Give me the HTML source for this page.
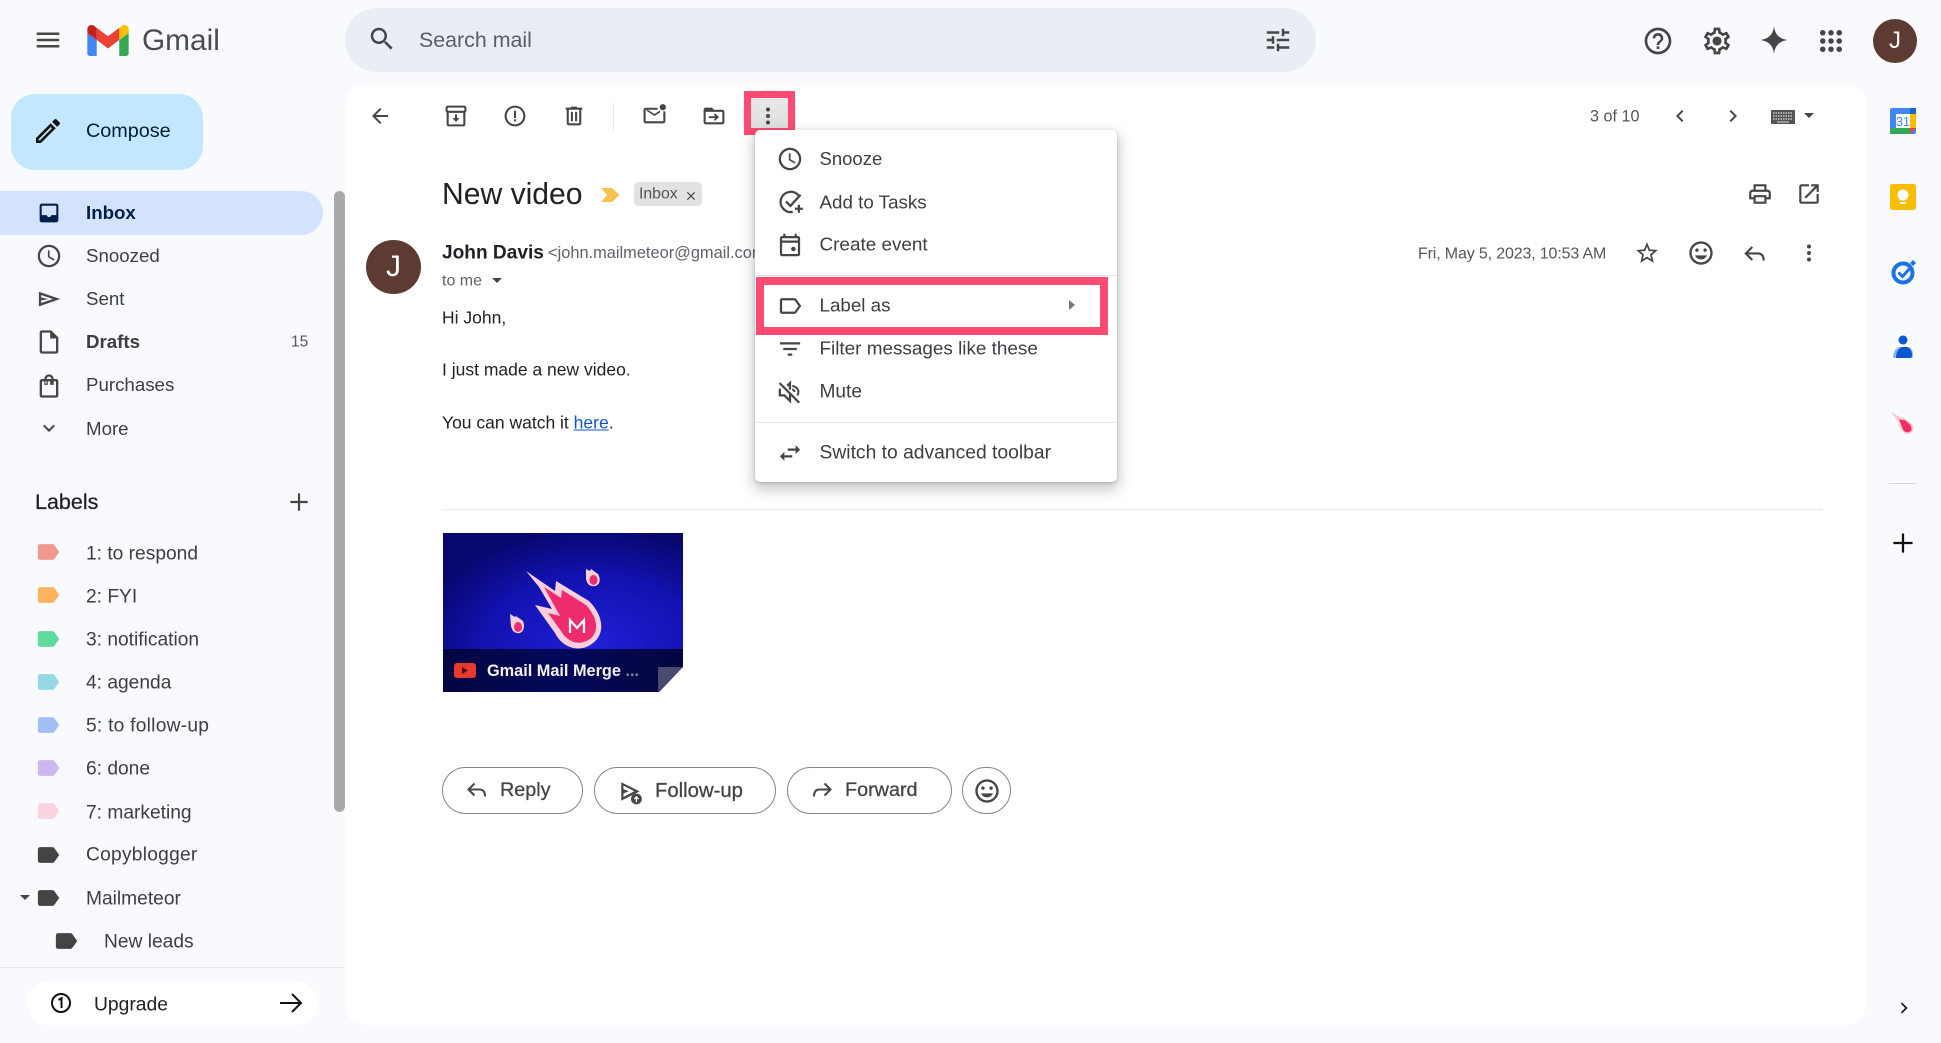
<!DOCTYPE html>
<html lang="en"><head><meta charset="utf-8"><title>Gmail</title>
<style>
*{box-sizing:border-box}
html,body{margin:0;padding:0}
body{width:1941px;height:1043px;overflow:hidden;position:relative;background:#f8fafd;font-family:"Liberation Sans",sans-serif;color:#3c4043}
.t{position:absolute;transform:translateY(-50%);white-space:nowrap;line-height:1.2}
.a{position:absolute}
.i{position:absolute;transform:translate(-50%,-50%);fill:#444746;display:block}
.s{fill:none;stroke:#444746;stroke-width:2}
.nav{font-size:18.7px;left:86px;color:#3c4043}
.lab{font-size:19.200px;left:86px;color:#3c4043}
.m{font-size:19.100px;left:819.500px;color:#3c4043}
.b{position:absolute;top:767px;height:47px;border:1.5px solid #80868b;border-radius:24px;background:#fff}
.bt{font-size:19.800px;color:#444;-webkit-text-stroke:.3px #444}
</style></head><body>
<svg width="0" height="0" style="position:absolute"><defs>
<symbol id="clock" viewBox="0 0 24 24"><path d="M11.99 2C6.47 2 2 6.48 2 12s4.47 10 9.99 10C17.52 22 22 17.52 22 12S17.52 2 11.99 2zM12 20c-4.42 0-8-3.58-8-8s3.58-8 8-8 8 3.58 8 8-3.58 8-8 8z"/><path d="M12.5 7H11v6l5.25 3.15.75-1.23-4.5-2.67z"/></symbol>
<symbol id="smile" viewBox="0 0 24 24"><path d="M11.99 2C6.47 2 2 6.48 2 12s4.47 10 9.99 10C17.52 22 22 17.52 22 12S17.52 2 11.99 2zM12 20c-4.42 0-8-3.58-8-8s3.58-8 8-8 8 3.58 8 8-3.58 8-8 8zm3.5-9c.83 0 1.5-.67 1.5-1.5S16.33 8 15.5 8 14 8.67 14 9.5s.67 1.5 1.5 1.5zm-7 0c.83 0 1.5-.67 1.5-1.5S9.33 8 8.5 8 7 8.67 7 9.5 7.67 11 8.5 11zm3.5 6.5c2.33 0 4.31-1.46 5.11-3.5H6.89c.8 2.04 2.78 3.5 5.11 3.5z"/></symbol>
<symbol id="tag" viewBox="0 0 24 24"><path d="M17.63 5.84C17.27 5.33 16.67 5 16 5L5 5.01C3.9 5.01 3 5.9 3 7v10c0 1.1.9 1.99 2 1.99L16 19c.67 0 1.27-.33 1.63-.84L22 12l-4.37-6.16z"/></symbol>
<symbol id="dots" viewBox="0 0 24 24"><circle cx="12" cy="5.5" r="2"/><circle cx="12" cy="12" r="2"/><circle cx="12" cy="18.5" r="2"/></symbol>
</defs></svg>

<!-- header -->
<svg class="i" style="left:48px;top:40px" width="30" height="30" viewBox="0 0 24 24"><path d="M3 18h18v-2H3v2zm0-5h18v-2H3v2zm0-7v2h18V6H3z"/></svg>
<svg class="a" style="left:87px;top:25px" width="42" height="31" viewBox="52 42 88 66"><path fill="#4285f4" d="M58 108h14V74L52 59v43c0 3.32 2.69 6 6 6"/><path fill="#34a853" d="M120 108h14c3.32 0 6-2.69 6-6V59l-20 15"/><path fill="#fbbc04" d="M120 48v26l20-15v-8c0-7.42-8.47-11.65-14.4-7.2"/><path fill="#ea4335" d="M72 74V48l24 18 24-18v26L96 92"/><path fill="#c5221f" d="M52 51v8l20 15V48l-5.6-4.2c-5.94-4.45-14.4-.22-14.4 7.2"/></svg>
<div class="t" style="left:142px;top:41px;font-size:29.800px;color:#4a4d50">Gmail</div>

<div class="a" style="left:345px;top:8px;width:971px;height:64px;border-radius:32px;background:#e9eef6"></div>
<svg class="i" style="left:382px;top:39px" width="30" height="30" viewBox="0 0 24 24"><path d="M15.5 14h-.79l-.28-.27C15.41 12.59 16 11.11 16 9.5 16 5.91 13.09 3 9.5 3S3 5.91 3 9.5 5.91 16 9.5 16c1.61 0 3.09-.59 4.23-1.57l.27.28v.79l5 4.99L20.49 19l-4.99-5zm-6 0C7.01 14 5 11.99 5 9.5S7.01 5 9.5 5 14 7.01 14 9.5 11.99 14 9.5 14z"/></svg>
<div class="t" style="left:419px;top:41px;font-size:21.400px;color:#5a5e62">Search mail</div>
<svg class="i" style="left:1278px;top:40px" width="30" height="30" viewBox="0 0 24 24"><path d="M3 17v2h6v-2H3zM3 5v2h10V5H3zm10 16v-2h8v-2h-8v-2h-2v6h2zM7 9v2H3v2h4v2h2V9H7zm14 4v-2H11v2h10zm-6-4h2V7h4V5h-4V3h-2v6z"/></svg>

<svg class="i" style="left:1658px;top:41px" width="32" height="32" viewBox="0 0 24 24"><path d="M11 18h2v-2h-2v2zm1-16C6.48 2 2 6.48 2 12s4.48 10 10 10 10-4.48 10-10S17.52 2 12 2zm0 18c-4.41 0-8-3.59-8-8s3.59-8 8-8 8 3.59 8 8-3.59 8-8 8zm0-14c-2.21 0-4 1.79-4 4h2c0-1.1.9-2 2-2s2 .9 2 2c0 2-3 1.75-3 5h2c0-2.25 3-2.5 3-5 0-2.21-1.79-4-4-4z"/></svg>
<svg class="i" style="left:1717px;top:41px" width="32" height="32" viewBox="0 0 24 24"><path d="M19.43 12.98c.04-.32.07-.64.07-.98 0-.34-.03-.66-.07-.98l2.11-1.65c.19-.15.24-.42.12-.64l-2-3.46c-.09-.16-.26-.25-.44-.25-.06 0-.12.01-.17.03l-2.49 1c-.52-.4-1.08-.73-1.69-.98l-.38-2.65C14.46 2.18 14.25 2 14 2h-4c-.25 0-.46.18-.49.42l-.38 2.65c-.61.25-1.17.59-1.69.98l-2.49-1c-.06-.02-.12-.03-.18-.03-.17 0-.34.09-.43.25l-2 3.46c-.13.22-.07.49.12.64l2.11 1.65c-.04.32-.07.65-.07.98 0 .33.03.66.07.98l-2.11 1.65c-.19.15-.24.42-.12.64l2 3.46c.09.16.26.25.44.25.06 0 .12-.01.17-.03l2.49-1c.52.4 1.08.73 1.69.98l.38 2.65c.03.24.24.42.49.42h4c.25 0 .46-.18.49-.42l.38-2.65c.61-.25 1.17-.59 1.69-.98l2.49 1c.06.02.12.03.18.03.17 0 .34-.09.43-.25l2-3.46c.12-.22.07-.49-.12-.64l-2.11-1.65zm-1.98-1.71c.04.31.05.52.05.73 0 .21-.02.43-.05.73l-.14 1.13.89.7 1.08.84-.7 1.21-1.27-.51-1.04-.42-.9.68c-.43.32-.84.56-1.25.73l-1.06.43-.16 1.13-.2 1.35h-1.4l-.19-1.35-.16-1.13-1.06-.43c-.43-.18-.83-.41-1.23-.71l-.91-.7-1.06.43-1.27.51-.7-1.21 1.08-.84.89-.7-.14-1.13c-.03-.31-.05-.54-.05-.74s.02-.43.05-.73l.14-1.13-.89-.7-1.08-.84.7-1.21 1.27.51 1.04.42.9-.68c.43-.32.84-.56 1.25-.73l1.06-.43.16-1.13.2-1.35h1.39l.19 1.35.16 1.13 1.06.43c.43.18.83.41 1.23.71l.91.7 1.06-.43 1.27-.51.7 1.21-1.07.85-.89.7.14 1.13z"/><circle cx="12" cy="12" r="3.4"/></svg>
<svg class="i" style="left:1774px;top:40px" width="30" height="30" viewBox="0 0 24 24"><path d="M12 1C12.8 7.5 16 11 23 12 16 13 12.8 16.500 12 23 11.200 16.500 8 13 1 12 8 11 11.200 7.500 12 1z"/></svg>
<svg class="i" style="left:1830.500px;top:40.500px" width="22" height="22" viewBox="0 0 24 24"><g><circle cx="3" cy="3" r="3"/><circle cx="12" cy="3" r="3"/><circle cx="21" cy="3" r="3"/><circle cx="3" cy="12" r="3"/><circle cx="12" cy="12" r="3"/><circle cx="21" cy="12" r="3"/><circle cx="3" cy="21" r="3"/><circle cx="12" cy="21" r="3"/><circle cx="21" cy="21" r="3"/></g></svg>
<div class="a" style="left:1873px;top:19px;width:44px;height:44px;border-radius:50%;background:#5d3a32;color:#fff;font-size:24px;line-height:44px;text-align:center">J</div>

<!-- sidebar -->
<div class="a" style="left:11px;top:94px;width:192px;height:76px;border-radius:24px;background:#c2e7ff"></div>
<svg class="i" style="left:48px;top:131px;fill:#111" width="32" height="32" viewBox="0 0 24 24"><path d="M3 17.250V21h3.750L17.810 9.940l-3.750-3.750L3 17.250zM5.920 19H5v-.92l9.060-9.060.92.92L5.920 19zM20.710 7.040c.39-.39.39-1.020 0-1.410l-2.340-2.340c-.2-.2-.45-.29-.71-.29s-.51.09-.7.29l-1.830 1.830 3.750 3.750 1.830-1.830z"/></svg>
<div class="t" style="left:86px;top:132.200px;font-size:19.800px;color:#001d35">Compose</div>

<div class="a" style="left:0;top:191px;width:323px;height:44px;border-radius:0 22px 22px 0;background:#d3e3fd"></div>
<div class="a" style="left:334px;top:191px;width:11px;height:621px;border-radius:6px;background:#a8a9ad"></div>

<svg class="i" style="left:48.500px;top:213px;fill:#041e49" width="25" height="25" viewBox="0 0 24 24"><path d="M19 3H5c-1.100 0-2 .9-2 2v14c0 1.100.9 2 2 2h14c1.100 0 2-.9 2-2V5c0-1.100-.9-2-2-2zm0 11h-4.990c0 1.100-.9 2-2 2s-2-.9-2-2H5V5h14v9z"/></svg>
<div class="t nav" style="top:212.500px;font-weight:bold;color:#041e49">Inbox</div>
<svg class="i" style="left:48.500px;top:256px" width="27" height="27" viewBox="0 0 24 24"><use href="#clock"/></svg>
<div class="t nav" style="top:256px">Snoozed</div>
<svg class="i" style="left:48.500px;top:299px" width="27" height="27" viewBox="0 0 24 24"><path d="M3 5.500v13L22 12 3 5.500zm2 2.900L15.500 12 5 15.600v-2.300l6.500-1.300-6.500-1.300V8.400z"/></svg>
<div class="t nav" style="top:299px">Sent</div>
<svg class="i" style="left:48.500px;top:342px" width="28" height="28" viewBox="0 0 24 24"><path d="M14 2H6c-1.100 0-2 .9-2 2v16c0 1.100.9 2 2 2h12c1.100 0 2-.9 2-2V8l-6-6zm4 18H6V4h7v5h5v11z"/></svg>
<div class="t nav" style="top:342px;font-weight:bold">Drafts</div>
<div class="t" style="left:291px;top:343px;font-size:15.500px;color:#555">15</div>
<svg class="i" style="left:48.500px;top:386px" width="28" height="28" viewBox="0 0 24 24"><path d="M18 6h-2c0-2.210-1.790-4-4-4S8 3.790 8 6H6c-1.100 0-2 .9-2 2v12c0 1.100.9 2 2 2h12c1.100 0 2-.9 2-2V8c0-1.100-.9-2-2-2zm-8 2v2h-1V8h1zm0-2c0-1.100.9-2 2-2s2 .9 2 2h-4zm8 14H6V8h2v3h3V8h2v3h3V8h2v12z"/></svg>
<div class="t nav" style="top:385px">Purchases</div>
<svg class="i" style="left:48.500px;top:428px" width="24" height="24" viewBox="0 0 24 24"><path d="M16.590 8.590L12 13.170 7.410 8.590 6 10l6 6 6-6z"/></svg>
<div class="t nav" style="top:428.500px">More</div>

<div class="t" style="left:35px;top:502.500px;font-size:21.500px;color:#202124;-webkit-text-stroke:.25px #202124">Labels</div>
<svg class="i" style="left:299px;top:501.500px" width="26" height="26" viewBox="0 0 24 24"><path d="M20 13h-7v7h-2v-7H4v-2h7V4h2v7h7v2z"/></svg>

<svg class="i" style="left:48px;top:552px;fill:#ee9a8e" width="27" height="27" viewBox="0 0 24 24"><use href="#tag"/></svg>
<div class="t lab" style="top:553.500px">1: to respond</div>
<svg class="i" style="left:48px;top:595px;fill:#ffb35c" width="27" height="27" viewBox="0 0 24 24"><use href="#tag"/></svg>
<div class="t lab" style="top:596.500px">2: FYI</div>
<svg class="i" style="left:48px;top:638.500px;fill:#5edb9c" width="27" height="27" viewBox="0 0 24 24"><use href="#tag"/></svg>
<div class="t lab" style="top:639.500px">3: notification</div>
<svg class="i" style="left:48px;top:681.500px;fill:#95d9e4" width="27" height="27" viewBox="0 0 24 24"><use href="#tag"/></svg>
<div class="t lab" style="top:683px">4: agenda</div>
<svg class="i" style="left:48px;top:725px;fill:#a2bff5" width="27" height="27" viewBox="0 0 24 24"><use href="#tag"/></svg>
<div class="t lab" style="top:726px;letter-spacing:.25px">5: to follow-up</div>
<svg class="i" style="left:48px;top:768px;fill:#cdb7ee" width="27" height="27" viewBox="0 0 24 24"><use href="#tag"/></svg>
<div class="t lab" style="top:769px">6: done</div>
<svg class="i" style="left:48px;top:811px;fill:#fbd2e0" width="27" height="27" viewBox="0 0 24 24"><use href="#tag"/></svg>
<div class="t lab" style="top:812.500px">7: marketing</div>
<svg class="i" style="left:48px;top:854.500px;fill:#444" width="27" height="27" viewBox="0 0 24 24"><use href="#tag"/></svg>
<div class="t lab" style="top:855px;letter-spacing:.25px">Copyblogger</div>
<div class="a" style="left:20px;top:895px;border-left:5.500px solid transparent;border-right:5.500px solid transparent;border-top:5.500px solid #444"></div>
<svg class="i" style="left:48px;top:897.500px;fill:#444" width="27" height="27" viewBox="0 0 24 24"><use href="#tag"/></svg>
<div class="t lab" style="top:898.500px">Mailmeteor</div>
<svg class="i" style="left:65.500px;top:941px;fill:#444" width="27" height="27" viewBox="0 0 24 24"><use href="#tag"/></svg>
<div class="t lab" style="top:942px;left:104px">New leads</div>

<div class="a" style="left:0;top:967px;width:345px;height:1px;background:#e6e8ec"></div>
<div class="a" style="left:27px;top:981px;width:291px;height:44px;border-radius:22px;background:#fff"></div>
<svg class="a" style="left:50px;top:992px" width="22" height="22" viewBox="0 0 22 22"><circle cx="11" cy="11" r="9" fill="none" stroke="#111" stroke-width="2"/><path d="M8.500 8l3-1.800V16" fill="none" stroke="#111" stroke-width="2"/></svg>
<div class="t" style="left:94px;top:1004.500px;font-size:19.300px;color:#202124">Upgrade</div>
<svg class="i" style="left:291px;top:1003px;fill:none;stroke:#111;stroke-width:2" width="24" height="24" viewBox="0 0 24 24"><path d="M1 12h21M13 3l9 9-9 9"/></svg>

<!-- main panel -->
<div class="a" style="left:345px;top:84px;width:1521px;height:941px;border-radius:20px;background:#fff"></div>

<svg class="i" style="left:380px;top:116px" width="24" height="24" viewBox="0 0 24 24"><path d="M20 11H7.830l5.590-5.590L12 4l-8 8 8 8 1.410-1.410L7.830 13H20v-2z"/></svg>
<svg class="i" style="left:455.500px;top:116px" width="25" height="25" viewBox="0 0 24 24"><path d="M20 2H4C3 2 2 3 2 4v3.010c0 .72.43 1.340 1 1.690V20c0 1.100 1.100 2 2 2h14c.9 0 2-.9 2-2V8.700c.57-.35 1-.97 1-1.690V4c0-1-1-2-2-2zm-1 18H5V9h14v11zm1-13H4V4h16v3z"/><path d="M13 10.500h-2v3.500H8.500l3.500 3.800 3.500-3.800H13z"/></svg>
<svg class="i" style="left:514.700px;top:116px" width="25" height="25" viewBox="0 0 24 24"><path d="M12 2C6.480 2 2 6.480 2 12s4.480 10 10 10 10-4.480 10-10S17.520 2 12 2zm0 18c-4.420 0-8-3.580-8-8s3.580-8 8-8 8 3.580 8 8-3.580 8-8 8z"/><path d="M11 7h2v7h-2zM11 15.200h2v2h-2z"/></svg>
<svg class="i" style="left:574px;top:116px" width="25" height="25" viewBox="0 0 24 24"><path d="M15 4V3H9v1H4v2h1v13c0 1.100.9 2 2 2h10c1.100 0 2-.9 2-2V6h1V4h-5zm2 15H7V6h10v13zM9 8h2v9H9zm4 0h2v9h-2z"/></svg>
<div class="a" style="left:613px;top:103px;width:1px;height:27px;background:#e3e5e8"></div>
<svg class="i" style="left:655px;top:115px" width="25" height="25" viewBox="0 0 24 24"><path d="M20 8.500V18H3V7h11.500V5H3c-1.100 0-2 .9-2 2v11c0 1.100.9 2 2 2h17c1.100 0 2-.9 2-2V8.500h-2z"/><path d="M4 8l7.500 5 5.500-3.500v-2l-5.500 3.500L4 6.300z"/><circle cx="19.500" cy="4.500" r="3"/></svg>
<svg class="i" style="left:714px;top:116px" width="25" height="25" viewBox="0 0 24 24"><path d="M20 6h-8l-2-2H4c-1.100 0-1.990.9-1.990 2L2 18c0 1.100.9 2 2 2h16c1.100 0 2-.9 2-2V8c0-1.100-.9-2-2-2zm0 12H4V8h16v10z"/><path d="M13 9.500l-1.200 1.200 1.600 1.500H7v1.800h6.400l-1.600 1.500 1.200 1.200 3.800-3.600z"/></svg>

<div class="a" style="left:742px;top:89px;width:52px;height:52px;border-radius:50%;background:#f1f1f1"></div>
<div class="a" style="left:744px;top:91px;width:51px;height:44px;border:7.500px solid #ff4a72;background:linear-gradient(#e8e8e8,#dedede)"></div>
<svg class="i" style="left:768px;top:116px" width="24" height="24" viewBox="0 0 24 24"><use href="#dots"/></svg>

<div class="t" style="left:442px;top:195px;font-size:30.100px;color:#202124">New video</div>
<svg class="a" style="left:601px;top:187px" width="19" height="16" viewBox="0 0 19 16"><path d="M0 1h11l7.500 7L11 15H0l6-7z" fill="#f7c14e"/></svg>
<div class="a" style="left:634px;top:182px;width:68px;height:24px;background:#e2e2e2;border-radius:4px"></div>
<div class="t" style="left:639px;top:195px;font-size:15.800px;color:#555">Inbox</div>
<svg class="i" style="left:691px;top:195.500px" width="14" height="14" viewBox="0 0 24 24"><path d="M19 6.410L17.590 5 12 10.590 6.410 5 5 6.410 10.590 12 5 17.590 6.410 19 12 13.410 17.590 19 19 17.590 13.410 12z"/></svg>
<svg class="i" style="left:1760px;top:194px" width="26" height="26" viewBox="0 0 24 24"><path d="M19 8h-1V3H6v5H5c-1.660 0-3 1.340-3 3v6h4v4h12v-4h4v-6c0-1.660-1.340-3-3-3zM8 5h8v3H8V5zm8 12v2H8v-4h8v2zm2-2v-2H6v2H4v-4c0-.55.45-1 1-1h14c.55 0 1 .45 1 1v4h-2z"/></svg>
<svg class="i" style="left:1809px;top:194px" width="26" height="26" viewBox="0 0 24 24"><path d="M19 19H5V5h7V3H5c-1.110 0-2 .9-2 2v14c0 1.100.89 2 2 2h14c1.100 0 2-.9 2-2v-7h-2v7zM14 3v2h3.590l-9.830 9.830 1.410 1.410L19 6.410V10h2V3h-7z"/></svg>

<div class="a" style="left:366px;top:240px;width:55px;height:54px;border-radius:50%;background:#5d3a32;color:#fff;font-size:30px;line-height:54px;text-align:center">J</div>
<div class="t" style="left:442px;top:253.500px;font-size:19.100px;font-weight:bold;color:#202124">John Davis</div>
<div class="t" style="left:548px;top:254px;width:207px;overflow:hidden;font-size:16.400px;color:#5f6368">&lt;john.mailmeteor@gmail.com&gt;</div>
<div class="t" style="left:442px;top:281px;font-size:16px;color:#5f6368">to me</div>
<div class="a" style="left:492px;top:278px;border-left:5px solid transparent;border-right:5px solid transparent;border-top:5px solid #444"></div>

<div class="t" style="left:442px;top:317.500px;font-size:17.500px;color:#222">Hi John,</div>
<div class="t" style="left:442px;top:370px;font-size:17.500px;color:#222">I just made a new video.</div>
<div class="t" style="left:442px;top:423px;font-size:17.500px;color:#222">You can watch it <span style="color:#1155cc;text-decoration:underline">here</span>.</div>

<div class="t" style="left:1590px;top:117px;font-size:16.200px;color:#555">3 of 10</div>
<svg class="i" style="left:1680px;top:116px" width="24" height="24" viewBox="0 0 24 24"><path d="M15.410 7.410L14 6l-6 6 6 6 1.410-1.410L10.830 12z"/></svg>
<svg class="i" style="left:1733px;top:116px" width="24" height="24" viewBox="0 0 24 24"><path d="M10 6L8.590 7.410 13.170 12l-4.580 4.590L10 18l6-6z"/></svg>
<svg class="a" style="left:1771px;top:110px" width="24" height="14" viewBox="0 0 24 14"><rect width="24" height="14" fill="#555"/><path d="M2 3h20M2 6h20M2 9h20" stroke="#ddd" stroke-width="1.200" stroke-dasharray="1.500 1"/><path d="M6 12h12" stroke="#ddd"/></svg>
<div class="a" style="left:1804px;top:113px;border-left:5.500px solid transparent;border-right:5.500px solid transparent;border-top:5.500px solid #444"></div>

<div class="t" style="left:1418px;top:254px;font-size:16px;letter-spacing:-.15px;color:#555">Fri, May 5, 2023, 10:53 AM</div>
<svg class="i" style="left:1647px;top:253px" width="26" height="26" viewBox="0 0 24 24"><path d="M22 9.240l-7.190-.62L12 2 9.190 8.630 2 9.240l5.460 4.730L5.820 21 12 17.270 18.180 21l-1.630-7.030L22 9.240zM12 15.400l-3.760 2.270 1-4.280-3.320-2.880 4.380-.38L12 6.100l1.710 4.040 4.380.38-3.320 2.880 1 4.280L12 15.400z"/></svg>
<svg class="i" style="left:1701px;top:253px" width="28" height="28" viewBox="0 0 24 24"><use href="#smile"/></svg>
<svg class="i s" style="left:1755px;top:254px" width="26" height="26" viewBox="0 0 24 24"><path d="M9.500 5.500L3.500 11.500l6 6M3.500 11.500h11c3.500 0 5.500 2 5.500 6.500"/></svg>
<svg class="i" style="left:1809px;top:253px" width="24" height="24" viewBox="0 0 24 24"><use href="#dots"/></svg>

<div class="a" style="left:443px;top:509px;width:1379px;border-top:1px dotted #dcdcdc"></div>

<!-- video thumbnail -->
<svg class="a" style="left:443px;top:533px" width="241" height="160" viewBox="0 0 241 160">
<defs><radialGradient id="bg" cx="62%" cy="72%" r="75%"><stop offset="0" stop-color="#2020d8"/><stop offset=".6" stop-color="#1212b0"/><stop offset="1" stop-color="#07076e"/></radialGradient>
<linearGradient id="bar" x1="0" x2="1" y1="0" y2="0"><stop offset="0" stop-color="#03063f"/><stop offset=".5" stop-color="#05085a"/><stop offset="1" stop-color="#03063f"/></linearGradient></defs>
<rect x="0" y="0" width="240" height="159" fill="url(#bg)"/>
<rect x="0" y="116" width="240" height="43" fill="url(#bar)"/>
<path d="M83 38L112 58 113 48 146 68C160 82 163 100 150 110 138 120 120 116 112 100L92 72 109 76 96 54z" fill="#fbd0dc"/>
<path d="M101 54L118 65 119 57 143 72C154 84 157 98 147 106 137 113 125 110 118 98L105 80 117 83z" fill="#ee2b6e"/>
<path d="M127 100v-13l7 8 7-8v13" fill="none" stroke="#fff" stroke-width="2.200"/>
<path d="M143 36l4 2 1-2 7 5c3 5 2 11-3 12-5 1-8-2-9-7z" fill="#fbd0dc"/><ellipse cx="150.500" cy="47" rx="4" ry="5" fill="#ee2b6e"/>
<path d="M67 81l5 3 1-1 7 5c2 5 1 10-3 12-5 1-8-2-9-7z" fill="#fbd0dc"/><ellipse cx="75" cy="94" rx="4" ry="5" fill="#ee2b6e"/>
<rect x="11" y="130" width="22" height="15" rx="3" fill="#e8392c"/><path d="M19 134l6 3.500-6 3.500z" fill="#501010"/>
<polygon points="215,134 240,134 215,159" fill="#494a6e"/><polygon points="240,134 241,160 215,160" fill="#fff"/>
<text x="44" y="143" font-family="Liberation Sans, sans-serif" font-size="16.300" font-weight="bold" fill="#f2f2f2">Gmail Mail Merge <tspan fill="#888">...</tspan></text>
</svg>

<!-- buttons -->
<div class="b" style="left:442px;width:141px"></div>
<svg class="i s" style="left:477px;top:790px" width="24" height="24" viewBox="0 0 24 24"><path d="M9.500 5.500L3.500 11.500l6 6M3.500 11.500h11c3.500 0 5.500 2 5.500 7"/></svg>
<div class="t bt" style="left:500px;top:791px">Reply</div>
<div class="b" style="left:594px;width:182px"></div>
<svg class="a" style="left:618px;top:779px;fill:#444746" width="26" height="27" viewBox="0 0 24 25"><path d="M3 3v17L20 11.500 3 3zm2 3.100l10 5.300-10 5.300v-3.300l5-2-5-2V6.100z"/><circle cx="17" cy="18.500" r="5" fill="#444746"/><path d="M17 21.500v-5M15 18.500l2-2 2 2" stroke="#fff" fill="none" stroke-width="1.200"/></svg>
<div class="t bt" style="left:655px;top:791px;font-size:20.300px">Follow-up</div>
<div class="b" style="left:787px;width:165px"></div>
<svg class="i s" style="left:822px;top:790px;transform:translate(-50%,-50%) scaleX(-1)" width="24" height="24" viewBox="0 0 24 24"><path d="M9.500 5.500L3.500 11.500l6 6M3.500 11.500h11c3.500 0 5.500 2 5.500 7"/></svg>
<div class="t bt" style="left:845px;top:791px">Forward</div>
<div class="b" style="left:962px;width:49px"></div>
<svg class="i" style="left:986.500px;top:791px" width="28" height="28" viewBox="0 0 24 24"><use href="#smile"/></svg>

<!-- dropdown menu -->
<div class="a" style="left:755px;top:130px;width:362px;height:352px;background:#fff;border-radius:5px;box-shadow:0 6px 14px 2px rgba(60,64,67,.28),0 1px 3px rgba(60,64,67,.25)"></div>

<svg class="i" style="left:790px;top:159px" width="27" height="27" viewBox="0 0 24 24"><use href="#clock"/></svg>
<div class="t m" style="top:159.200px;font-size:18.500px">Snooze</div>
<svg class="i" style="left:791px;top:202px;fill:none;stroke:#444746;stroke-width:2" width="27" height="27" viewBox="0 0 24 24"><path d="M18.500 6A9 9 0 1 0 13.500 20.800"/><path d="M7.500 11.500l4 4L20.500 5.500"/><path d="M19 14.500v7M15.500 18h7"/></svg>
<div class="t m" style="top:202.700px;font-size:18.800px">Add to Tasks</div>
<svg class="i" style="left:790px;top:245px" width="27" height="27" viewBox="0 0 24 24"><path d="M19 4h-1V2h-2v2H8V2H6v2H5c-1.100 0-2 .9-2 2v14c0 1.100.9 2 2 2h14c1.100 0 2-.9 2-2V6c0-1.100-.9-2-2-2zm0 16H5V10h14v10zm0-12H5V6h14v2z"/><circle cx="15" cy="15.500" r="2"/></svg>
<div class="t m" style="top:246.200px;font-size:18.900px">Create event</div>
<div class="a" style="left:755px;top:275px;width:362px;height:1px;background:#e6e6e6"></div>

<div class="a" style="left:756px;top:277px;width:352px;height:58px;border:8px solid #ff4a72"></div>
<svg class="i" style="left:790px;top:306px" width="27" height="27" viewBox="0 0 24 24"><path d="M17.630 5.840C17.270 5.330 16.670 5 16 5L5 5.010C3.900 5.010 3 5.900 3 7v10c0 1.100.9 1.990 2 1.990L16 19c.67 0 1.270-.33 1.630-.84L22 12l-4.370-6.160zM16 17H5V7h11l3.550 5L16 17z"/></svg>
<div class="t m" style="top:306.200px;font-size:18.800px">Label as</div>
<div class="a" style="left:1069px;top:300px;border-top:5.500px solid transparent;border-bottom:5.500px solid transparent;border-left:6px solid #757575"></div>

<svg class="i" style="left:790px;top:349px" width="27" height="27" viewBox="0 0 24 24"><path d="M10 18h4v-2h-4v2zM3 6v2h18V6H3zm3 7h12v-2H6v2z"/></svg>
<div class="t m" style="top:349.700px;font-size:18.900px">Filter messages like these</div>
<svg class="i" style="left:790px;top:392px" width="27" height="27" viewBox="0 0 24 24"><path d="M3 9v6h4l5 5v-6.500M12 10V4L9.500 6.500" fill="none" stroke="#444746" stroke-width="2"/><path d="M14 6.500c3.500 1 5.500 3 5.500 5.500 0 1-.3 2-1 3M14 9.500c1.300.6 2 1.500 2 2.500" fill="none" stroke="#444746" stroke-width="1.800"/><path d="M3.400 3.300l17.500 17.500-1.400 1.400L2 4.700z"/></svg>
<div class="t m" style="top:393.200px">Mute</div>
<div class="a" style="left:755px;top:422px;width:362px;height:1px;background:#e6e6e6"></div>
<svg class="i" style="left:790px;top:453px" width="27" height="27" viewBox="0 0 24 24"><path d="M6.990 11L3 15l3.990 4v-3H14v-2H6.990v-3zM21 9l-3.990-4v3H10v2h7.010v3L21 9z"/></svg>
<div class="t m" style="top:453.200px;font-size:19.300px">Switch to advanced toolbar</div>

<!-- right side apps -->
<svg class="a" style="left:1890px;top:108px" width="26" height="26" viewBox="0 0 26 26"><rect width="26" height="26" rx="2" fill="#4285f4"/><rect x="6" y="6" width="14" height="14" fill="#fff"/><rect x="20" y="6" width="6" height="14" fill="#fbbc04"/><rect x="20" y="0" width="6" height="6" fill="#1967d2"/><rect x="0" y="20" width="20" height="6" fill="#34a853"/><polygon points="20,20 26,20 20,26" fill="#ea4335"/><text x="13" y="18" text-anchor="middle" font-family="Liberation Sans, sans-serif" font-size="12.500" fill="#4285f4">31</text></svg>
<svg class="a" style="left:1890px;top:184px" width="26" height="26" viewBox="0 0 26 26"><rect width="26" height="26" rx="2.500" fill="#fbbc04"/><circle cx="13" cy="11" r="5.500" fill="#fff"/><rect x="10" y="18" width="6" height="2" fill="#fff"/></svg>
<svg class="a" style="left:1891px;top:259px" width="26" height="26" viewBox="0 0 26 26"><circle cx="12" cy="14" r="9.500" fill="none" stroke="#1a73e8" stroke-width="4"/><path d="M7.500 13.500l4 4 9-10" fill="none" stroke="#1a73e8" stroke-width="3"/><path d="M19 4l3-3 3 3-3 3z" fill="#1a73e8"/></svg>
<svg class="a" style="left:1893px;top:335px" width="20" height="24" viewBox="0 0 20 24"><circle cx="10" cy="5" r="4.500" fill="#0b57d0"/><path d="M0 23c0-6 3-11 8-11h6c4 0 6 4 6 8 0 2-1 3-2 3z" fill="#8ab4f8"/><path d="M3 23c0-6 3-11 7-11h3c4 0 6 4 6 8 0 2-1 3-2 3z" fill="#0b57d0"/></svg>
<svg class="a" style="left:1890px;top:410px" width="27" height="26" viewBox="0 0 27 26"><path d="M1 2l10 6 1-1 9 6c3 4 3 8 0 10-3 2-7 1-9-3L8 14l3 1z" fill="#fdc3d1"/><path d="M9 9l4 1.500 1-1 6 5c2 3 2 6 0 7-3 2-6 0-7-2z" fill="#f22d63"/></svg>
<div class="a" style="left:1889px;top:483px;width:28px;height:1px;background:#d8dadd"></div>
<svg class="i" style="left:1903px;top:543px;fill:#111" width="27" height="27" viewBox="0 0 24 24"><path d="M20.500 13H13v7.500h-2V13H3.500v-2H11V3.500h2V11h7.500v2z"/></svg>
<svg class="i" style="left:1904px;top:1008px;fill:#222" width="22" height="22" viewBox="0 0 24 24"><path d="M10 6L8.590 7.410 13.170 12l-4.580 4.590L10 18l6-6z"/></svg>
</body></html>
